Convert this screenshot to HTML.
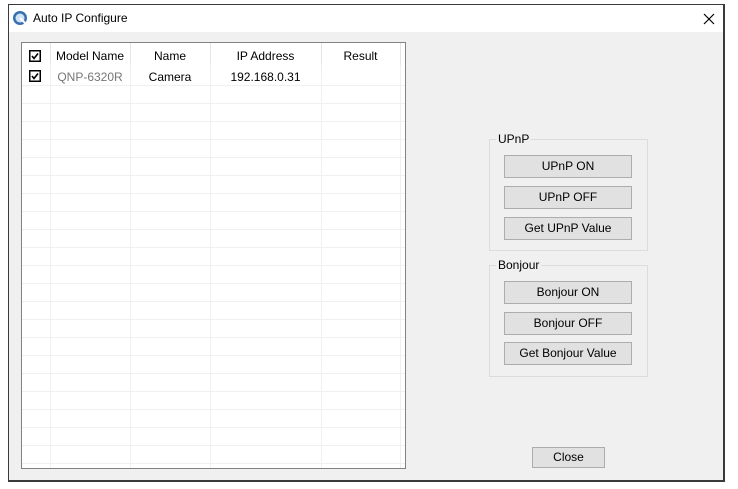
<!DOCTYPE html>
<html><head><meta charset="utf-8"><style>
*{margin:0;padding:0;box-sizing:border-box}
body{width:738px;height:489px;background:#fff;position:relative;overflow:hidden;font-family:"Liberation Sans","Noto Sans CJK KR",sans-serif;font-size:12px;color:#000}
.abs{position:absolute}
.win{left:8px;top:4px;width:717px;height:478px;border:2px solid #3a3a3a;border-left-width:1px;border-top-width:1px;background:#f0f0f0}
.title{left:0;top:0;width:100%;height:27px;background:#fff}
.list{left:21px;top:42px;width:385px;height:427px;border:1px solid #828282;background:#fff;overflow:hidden}
.vl{position:absolute;top:0;bottom:0;width:1px;background:#f0f0f0}
.hl{position:absolute;left:0;right:0;height:1px;background:#f0f0f0}
.t{position:absolute;white-space:nowrap;text-align:center}
.cb{position:absolute}
.grp{border:1px solid #dcdcdc}
.gl{background:#f0f0f0;padding:0 2px;font-size:12px}
.btn{position:absolute;background:#e1e1e1;border:1px solid #adadad;text-align:center;font-size:12px;line-height:20px}
</style></head><body>
<div class="abs win">
 <div class="abs title"></div>
 <svg class="abs" style="left:3px;top:5px" width="16" height="16" viewBox="0 0 16 16"><circle cx="8" cy="8" r="7" fill="#3a6fb0"/><circle cx="8" cy="8" r="4.5" fill="#cfe3f5"/><path d="M8 8 L14 14" stroke="#fff" stroke-width="2"/></svg>
 <div class="abs" style="left:24px;top:6px;font-size:12px">Auto IP Configure</div>
 <svg class="abs" style="left:694px;top:8px" width="12" height="12"><path d="M1 1L11 11M11 1L1 11" stroke="#000" stroke-width="1.2"/></svg>
</div>
<div class="abs list">
 <div class="vl" style="left:28px"></div><div class="vl" style="left:108px"></div><div class="vl" style="left:188px"></div><div class="vl" style="left:299px"></div><div class="vl" style="left:378px"></div>
 <div class="hl" style="top:42px"></div><div class="hl" style="top:60px"></div><div class="hl" style="top:78px"></div><div class="hl" style="top:96px"></div><div class="hl" style="top:114px"></div><div class="hl" style="top:132px"></div><div class="hl" style="top:150px"></div><div class="hl" style="top:168px"></div><div class="hl" style="top:186px"></div><div class="hl" style="top:204px"></div><div class="hl" style="top:222px"></div><div class="hl" style="top:240px"></div><div class="hl" style="top:258px"></div><div class="hl" style="top:276px"></div><div class="hl" style="top:294px"></div><div class="hl" style="top:312px"></div><div class="hl" style="top:330px"></div><div class="hl" style="top:348px"></div><div class="hl" style="top:366px"></div><div class="hl" style="top:384px"></div><div class="hl" style="top:402px"></div><div class="hl" style="top:420px"></div>
 <div style="position:absolute;left:0;right:0;top:0;height:22px;background:#fff"></div>
 <div class="vl" style="left:28px;height:22px;background:#e5e5e5"></div><div class="vl" style="left:108px;height:22px;background:#e5e5e5"></div><div class="vl" style="left:188px;height:22px;background:#e5e5e5"></div><div class="vl" style="left:299px;height:22px;background:#e5e5e5"></div><div class="vl" style="left:378px;height:22px;background:#e5e5e5"></div>
 <svg class="cb" style="left:7px;top:7px" width="12" height="12"><rect x="0.75" y="0.75" width="10.5" height="10.5" fill="#fff" stroke="#000" stroke-width="1.5"/><path d="M3 6L5 8.5L9 3.5" stroke="#000" stroke-width="1.6" fill="none"/></svg>
 <div class="t" style="left:28px;width:80px;top:6px">Model Name</div>
 <div class="t" style="left:108px;width:80px;top:6px">Name</div>
 <div class="t" style="left:188px;width:111px;top:6px">IP Address</div>
 <div class="t" style="left:299px;width:79px;top:6px">Result</div>
 <svg class="cb" style="left:7px;top:27px" width="12" height="12"><rect x="0.75" y="0.75" width="10.5" height="10.5" fill="#fff" stroke="#000" stroke-width="1.5"/><path d="M3 6L5 8.5L9 3.5" stroke="#000" stroke-width="1.6" fill="none"/></svg>
 <div class="t" style="left:28px;width:80px;top:27px;color:#777">QNP-6320R</div>
 <div class="t" style="left:108px;width:80px;top:27px">Camera</div>
 <div class="t" style="left:188px;width:111px;top:27px">192.168.0.31</div>
</div>
<div class="abs grp" style="left:489px;top:139px;width:159px;height:112px"></div>
<div class="abs gl" style="left:496px;top:132px">UPnP</div>
<div class="btn" style="left:504px;top:155px;width:128px;height:23px">UPnP ON</div>
<div class="btn" style="left:504px;top:186px;width:128px;height:23px">UPnP OFF</div>
<div class="btn" style="left:504px;top:217px;width:128px;height:23px">Get UPnP Value</div>
<div class="abs grp" style="left:489px;top:265px;width:159px;height:112px"></div>
<div class="abs gl" style="left:496px;top:258px">Bonjour</div>
<div class="btn" style="left:504px;top:281px;width:128px;height:23px">Bonjour ON</div>
<div class="btn" style="left:504px;top:312px;width:128px;height:23px">Bonjour OFF</div>
<div class="btn" style="left:504px;top:342px;width:128px;height:23px">Get Bonjour Value</div>
<div class="btn" style="left:532px;top:447px;width:73px;height:21px;line-height:18px">Close</div>
</body></html>
